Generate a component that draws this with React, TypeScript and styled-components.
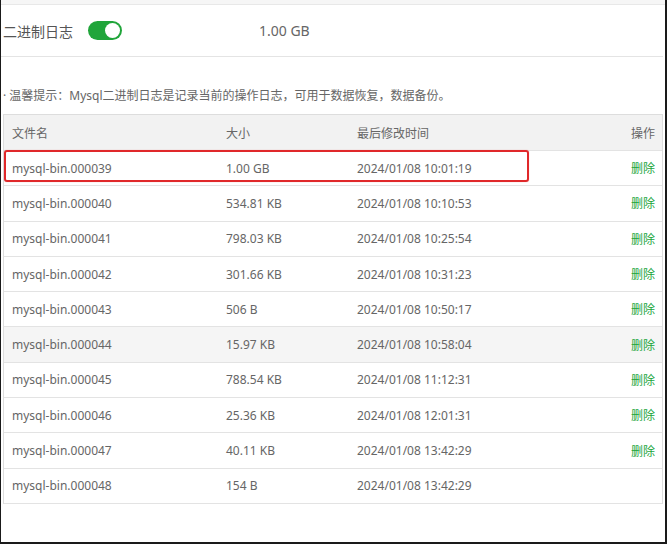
import React from 'react';
import styled, {createGlobalStyle} from 'styled-components';

const GlobalStyle = createGlobalStyle`
  html, body {
    margin: 0;
    padding: 0;
    background: #fff;
  }
  body {
    font-family: "Noto Sans", "Noto Sans CJK SC", sans-serif;
    color: #666;
  }
`;

const Frame = styled.div`
  box-sizing: border-box;
  width: 667px;
  height: 544px;
  border-left: 1px solid #1a1a1a;
  border-right: 2px solid #1a1a1a;
  border-bottom: 2px solid #1a1a1a;
  overflow: hidden;
  background: #fff;
`;
const TopStrip = styled.div`
  height: 4px;
  background: #f6f6f6;
  border-bottom: 1px solid #e8e8e8;
`;
const SwitchRow = styled.div`
  display: flex;
  align-items: center;
  height: 51px;
  padding-left: 2px;
  border-bottom: 1px solid #e4e4e4;
  margin-right: 2px;
`;
const Label = styled.span`
  width: 85px;
  font-size: 14px;
  color: #555;
`;
const Toggle = styled.span<{ $on: boolean }>`
  position: relative;
  display: inline-block;
  width: 34px;
  height: 19px;
  border-radius: 10px;
  background: ${p => p.$on ? '#20a53a' : '#ccc'};
  &::after {
    content: '';
    position: absolute;
    top: 2px;
    left: ${p => p.$on ? '17px' : '2px'};
    width: 15px;
    height: 15px;
    border-radius: 50%;
    background: #fff;
  }
`;
const Value = styled.span`
  margin-left: 137px;
  font-size: 14px;
  color: #666;
`;
const Tip = styled.p`
  margin: 30px 0 0;
  padding-left: 2px;
  font-size: 12px;
  line-height: 18px;
  color: #666;
`;
const TableWrap = styled.div`
  position: relative;
  margin: 9px 2px 0 2px;
  border: 1px solid #ddd;
  border-bottom: none;
`;
const Table = styled.table`
  width: 100%;
  border-collapse: collapse;
  font-size: 12px;
  color: #666;
  th, td {
    text-align: left;
    padding: 0 0 0 8px;
    font-weight: normal;
    border-bottom: 1px solid #e3e3e3;
  }
  th {
    height: 35px;
    background: #f2f2f2;
  }
  td {
    height: 34.3px;
  }
  th:last-child, td:last-child {
    text-align: right;
    padding-right: 7px;
  }
`;
const Row = styled.tr<{ $hover?: boolean }>`
  background: ${p => p.$hover ? '#f5f5f5' : '#fff'};
`;
const DelLink = styled.a`
  color: #20a53a;
  text-decoration: none;
  cursor: pointer;
`;
const Highlight = styled.div`
  position: absolute;
  left: 0;
  top: 35px;
  width: 525px;
  height: 32px;
  box-sizing: border-box;
  border: 2px solid #e0282a;
  border-radius: 3px;
  box-shadow: 0 0 1px rgba(224, 40, 42, 0.5);
  pointer-events: none;
`;

const logs = [
  {name: 'mysql-bin.000039', size: '1.00 GB', time: '2024/01/08 10:01:19'},
  {name: 'mysql-bin.000040', size: '534.81 KB', time: '2024/01/08 10:10:53'},
  {name: 'mysql-bin.000041', size: '798.03 KB', time: '2024/01/08 10:25:54'},
  {name: 'mysql-bin.000042', size: '301.66 KB', time: '2024/01/08 10:31:23'},
  {name: 'mysql-bin.000043', size: '506 B', time: '2024/01/08 10:50:17'},
  {name: 'mysql-bin.000044', size: '15.97 KB', time: '2024/01/08 10:58:04'},
  {name: 'mysql-bin.000045', size: '788.54 KB', time: '2024/01/08 11:12:31'},
  {name: 'mysql-bin.000046', size: '25.36 KB', time: '2024/01/08 12:01:31'},
  {name: 'mysql-bin.000047', size: '40.11 KB', time: '2024/01/08 13:42:29'},
  {name: 'mysql-bin.000048', size: '154 B', time: '2024/01/08 13:42:29'},
];

function App() {
  return (
    <Frame>
      <GlobalStyle/>
      <TopStrip/>
      <SwitchRow>
        <Label>二进制日志</Label>
        <Toggle $on={true}/>
        <Value>1.00 GB</Value>
      </SwitchRow>
      <Tip>· 温馨提示：Mysql二进制日志是记录当前的操作日志，可用于数据恢复，数据备份。</Tip>
      <TableWrap>
        <Table>
          <colgroup>
            <col style={{width: 214}}/>
            <col style={{width: 131}}/>
            <col/>
            <col style={{width: 80}}/>
          </colgroup>
          <thead>
          <tr>
            <th>文件名</th>
            <th>大小</th>
            <th>最后修改时间</th>
            <th>操作</th>
          </tr>
          </thead>
          <tbody>
          {logs.map((r, index) =>
            <Row key={r.name} $hover={index === 5}>
              <td>{r.name}</td>
              <td>{r.size}</td>
              <td>{r.time}</td>
              {/* 最新的日志正在写入，不能删除 */}
              <td>{index < logs.length - 1 && <DelLink>删除</DelLink>}</td>
            </Row>
          )}
          </tbody>
        </Table>
        <Highlight/>
      </TableWrap>
    </Frame>
  );
}

export default App;
